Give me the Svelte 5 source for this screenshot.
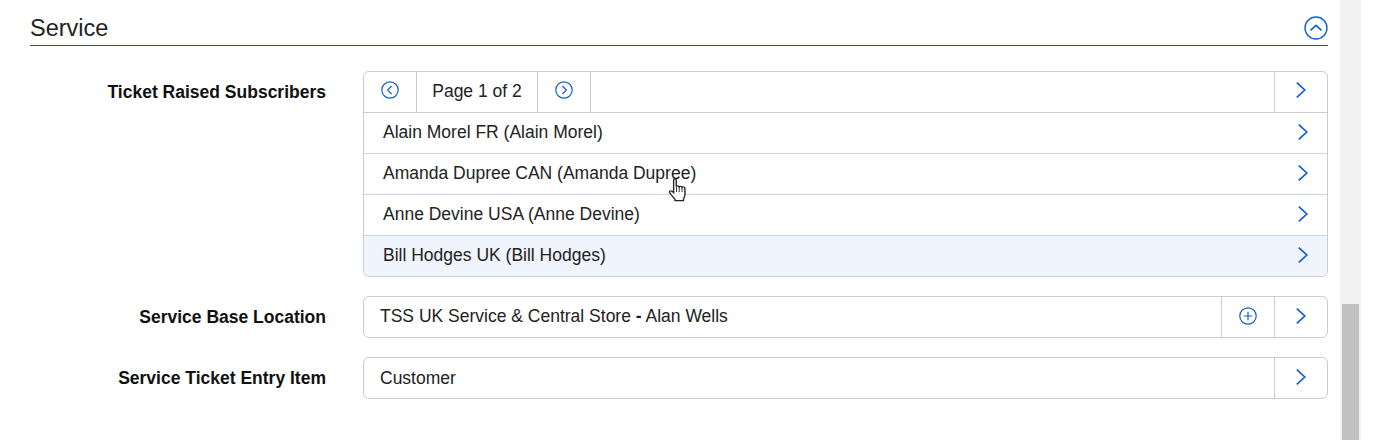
<script>
  const subscribers = [
    'Alain Morel FR (Alain Morel)',
    'Amanda Dupree CAN (Amanda Dupree)',
    'Anne Devine USA (Anne Devine)',
    'Bill Hodges UK (Bill Hodges)'
  ];
</script>

{#snippet chevron()}
  <svg class="chev" width="12" height="16" viewBox="0 0 12 16" fill="none" stroke="currentColor" stroke-width="1.7" aria-hidden="true">
    <path d="M1.8 .6 L9.8 8 L1.8 15.4"/>
  </svg>
{/snippet}

{#snippet circleChevron(d)}
  <svg width="18" height="18" viewBox="0 0 18 18" fill="none" stroke="currentColor" stroke-width="1.2" aria-hidden="true">
    <circle cx="9" cy="9" r="8.2"/>
    <path {d} stroke-width="1.2"/>
  </svg>
{/snippet}

<div class="page">
  <main class="content">
    <header class="section-head">
      <h2>Service</h2>
      <button class="collapse" aria-label="Collapse">
        <svg width="24" height="24" viewBox="0 0 24 24" fill="none" stroke="currentColor" stroke-width="1.4" aria-hidden="true">
          <circle cx="12" cy="12" r="11"/>
          <path d="M6.5 14.4 L12 9.4 L17.5 14.4" stroke-width="1.7"/>
        </svg>
      </button>
    </header>

    <div class="form-row first">
      <div class="label">Ticket Raised Subscribers</div>
      <div class="panel">
        <div class="pager">
          <span class="cell icon">{@render circleChevron('M10.6 5 L6.6 9 L10.6 13')}</span>
          <span class="cell page-no">Page 1 of 2</span>
          <span class="cell icon">{@render circleChevron('M7.4 5 L11.4 9 L7.4 13')}</span>
          <span class="spacer"></span>
          <span class="cell go">{@render chevron()}</span>
        </div>
        {#each subscribers as name, i}
          <div class="item" class:selected={i === 3}>
            <span>{name}</span>
            {@render chevron()}
          </div>
        {/each}
        <svg class="hand" width="20" height="24" viewBox="0 0 16 24" preserveAspectRatio="none" aria-hidden="true">
          <path d="M4.5 1.8 C4.5 .6 6.6 .6 6.6 1.8 L6.6 8.6 C7 7.6 8.8 7.6 9 8.8 C9.4 8 11 8.1 11.2 9.3 C11.7 8.6 13.4 8.8 13.5 10.2 L13.6 16 C13.6 18.5 13 19.6 12.4 21 L12.4 22.6 L5.6 22.6 L5.6 21.2 C4.2 19.6 2.6 16.8 1.4 14.9 C.6 13.6 1.9 12.2 3.2 13.2 L4.5 14.8 Z" fill="#fff" stroke="#222" stroke-width="1.1"/>
          <path d="M6.8 9 V14 M9 9 V14 M11.2 9.5 V14" stroke="#222" stroke-width=".8" fill="none"/>
        </svg>
      </div>
    </div>

    <div class="form-row">
      <div class="label">Service Base Location</div>
      <div class="field">
        <span class="value raised">TSS UK Service &amp; Central Store <b>-</b> Alan Wells</span>
        <span class="cell go">
          <svg width="18" height="18" viewBox="0 0 18 18" fill="none" stroke="currentColor" stroke-width="1.2" aria-hidden="true">
            <circle cx="9" cy="9" r="8.2"/>
            <path d="M9 4.8 V13.2 M4.8 9 H13.2"/>
          </svg>
        </span>
        <span class="cell go">{@render chevron()}</span>
      </div>
    </div>

    <div class="form-row">
      <div class="label">Service Ticket Entry Item</div>
      <div class="field">
        <span class="value">Customer</span>
        <span class="cell go">{@render chevron()}</span>
      </div>
    </div>
  </main>

  <div class="scrollbar"><div class="thumb"></div></div>
</div>

<style>
  :global(body) {
    background: #fff;
  }

  .page {
    display: flex;
    width: 1399px;
    height: 440px;
    overflow: hidden;
    font-family: "Liberation Sans", Arial, sans-serif;
    font-size: 17.5px;
    color: #222;
  }

  .content {
    width: 1298px;
    padding-left: 30px;
    padding-right: 12px;
  }

  .section-head {
    display: flex;
    justify-content: space-between;
    align-items: flex-end;
    height: 45px;
    border-bottom: 1px solid #1553b0;
  }

  h2 {
    margin: 0 0 3px;
    font-size: 23.5px;
    font-weight: 400;
    line-height: 28px;
  }

  .collapse {
    display: flex;
    padding: 0;
    margin-bottom: 5px;
    background: none;
    border: 0;
    color: #1360d2;
  }

  .form-row {
    display: flex;
    align-items: flex-start;
    margin-top: 19px;
  }
  .form-row.first {
    margin-top: 25px;
  }

  .label {
    width: 296px;
    margin-right: 37px;
    padding-top: 11px;
    font-weight: 700;
    line-height: 20px;
    text-align: right;
    color: #111;
  }

  .panel {
    position: relative;
    width: 965px;
    border: 1px solid #ccc;
    border-radius: 6px;
    box-sizing: border-box;
    overflow: hidden;
  }

  .pager {
    display: flex;
    height: 40px;
  }

  .cell {
    display: flex;
    align-items: center;
    justify-content: center;
    padding-bottom: 2px;
    color: #1360d2;
    box-sizing: border-box;
  }
  .pager .cell {
    padding-bottom: 4px;
  }
  .icon {
    width: 53px;
    border-right: 1px solid #ccc;
  }
  .pager .page-no {
    width: 121px;
    padding-bottom: 2px;
    border-right: 1px solid #ccc;
    color: #222;
  }
  .spacer {
    flex: 1;
  }
  .go {
    width: 53px;
    border-left: 1px solid #ccc;
  }

  .item {
    display: flex;
    align-items: center;
    justify-content: space-between;
    height: 40px;
    padding: 0 18px 0 19px;
    border-top: 1px solid #c9d6e8;
    color: #222;
  }
  .item:nth-child(2) {
    border-top-color: #ccc;
  }
  .item span {
    padding-bottom: 1px;
  }
  .item .chev {
    margin-bottom: 2px;
  }
  .chev {
    color: #1360d2;
  }
  .selected {
    background: #f0f4fc;
  }

  .field {
    display: flex;
    width: 965px;
    height: 42px;
    box-sizing: border-box;
    border: 1px solid #ccc;
    border-radius: 6px;
  }

  .value {
    flex: 1;
    align-self: center;
    padding-left: 16px;
  }
  .value.raised {
    padding-bottom: 2px;
  }

  .hand {
    position: absolute;
    left: 304px;
    top: 106px;
  }

  .scrollbar {
    box-sizing: border-box;
    width: 21px;
    padding: 304px 2px 0;
    background: #f1f1f1;
  }
  .thumb {
    height: 136px;
    background: #c1c1c1;
  }
</style>
